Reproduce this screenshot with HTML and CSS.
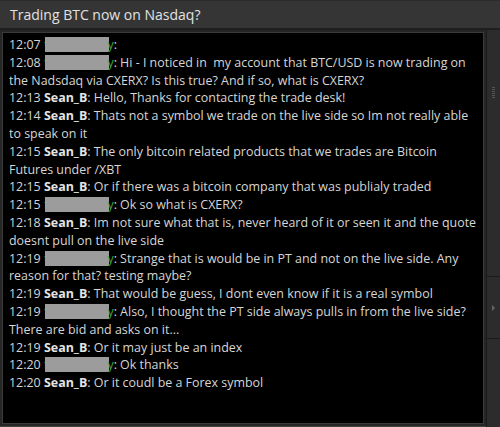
FILE: index.html
```html
<!DOCTYPE html>
<html>
<head>
<meta charset="utf-8">
<link rel="stylesheet" href="styles.css">
</head>
<body>
<div class="window">
  <div class="titlebar">Trading BTC now on Nasdaq?</div>
  <div class="main">
    <div class="frame">
      <div class="chat">
        <div class="line">12:07 <span class="user">t<span class="redact"></span>y</span>:</div>
        <div class="line">12:08 <span class="user">t<span class="redact"></span>y</span>: Hi - I noticed in&nbsp; my account that BTC/USD is now trading on the Nadsdaq via CXERX? Is this true? And if so, what is CXERX?</div>
        <div class="line">12:13 <b>Sean_B</b>: Hello, Thanks for contacting the trade desk!</div>
        <div class="line">12:14 <b>Sean_B</b>: Thats not a symbol we trade on the live side so Im not really able to speak on it</div>
        <div class="line">12:15 <b>Sean_B</b>: The only bitcoin related products that we trades are Bitcoin Futures under /XBT</div>
        <div class="line">12:15 <b>Sean_B</b>: Or if there was a bitcoin company that was publialy traded</div>
        <div class="line">12:15 <span class="user">t<span class="redact"></span>y</span>: Ok so what is CXERX?</div>
        <div class="line">12:18 <b>Sean_B</b>: Im not sure what that is, never heard of it or seen it and the quote doesnt pull on the live side</div>
        <div class="line">12:19 <span class="user">t<span class="redact"></span>y</span>: Strange that is would be in PT and not on the live side. Any reason for that? testing maybe?</div>
        <div class="line">12:19 <b>Sean_B</b>: That would be guess, I dont even know if it is a real symbol</div>
        <div class="line">12:19 <span class="user">t<span class="redact"></span>y</span>: Also, I thought the PT side always pulls in from the live side? There are bid and asks on it...</div>
        <div class="line">12:19 <b>Sean_B</b>: Or it may just be an index</div>
        <div class="line">12:20 <span class="user">t<span class="redact"></span>y</span>: Ok thanks</div>
        <div class="line">12:20 <b>Sean_B</b>: Or it coudl be a Forex symbol</div>
      </div>
    </div>
    <div class="side">
      <div class="seg seg-top"><span class="grip"></span></div>
      <div class="seg seg-tab"><span class="arrow"></span></div>
      <div class="seg seg-rest"></div>
    </div>
  </div>
</div>
</body>
</html>
```

FILE: styles.css
```css
html, body {
  margin: 0;
  padding: 0;
  background: #2a2a2a;
}
.window {
  width: 500px;
  height: 427px;
  display: flex;
  flex-direction: column;
  font-family: "Open Sans", "DejaVu Sans", sans-serif;
}
.titlebar {
  box-sizing: border-box;
  height: 30px;
  line-height: 27px;
  background: #353535;
  border-top: 1px solid #2c2c2c;
  border-bottom: 2px solid #1e1e1e;
  color: #e2e2e2;
  font-size: 14px;
  padding-left: 10px;
}
.main {
  flex: 1;
  display: flex;
  min-height: 0;
}
.frame {
  flex: 1;
  padding: 2px;
  background: #262626;
  border-bottom: 1px solid #444;
  display: flex;
}
.chat {
  flex: 1;
  background: #000;
  border: 1px solid #3a3a3a;
  padding: 3px 2px 0 6px;
  color: #d6d6d6;
  font-size: 12.45px;
  line-height: 17.8px;
}
.chat b {
  font-weight: 700;
  color: #e4e4e4;
}
.user {
  color: #3aa83a;
}
.redact {
  display: inline-block;
  width: 64px;
  height: 15px;
  background: #9c9c9c;
  vertical-align: -3px;
  margin-left: -3px;
  margin-right: -2px;
}
.side {
  width: 13px;
  background: #2c2c2c;
  border-left: 1px solid #1a1a1a;
  display: flex;
  flex-direction: column;
}
.seg-top {
  height: 246px;
  display: flex;
  align-items: center;
  justify-content: center;
  border-bottom: 1px solid #1a1a1a;
}
.grip {
  width: 3px;
  height: 12px;
  margin-top: -120px;
  background: repeating-linear-gradient(#555 0 1px, transparent 1px 2px);
}
.seg-tab {
  height: 61px;
  display: flex;
  align-items: center;
  justify-content: center;
  border-bottom: 1px solid #1a1a1a;
}
.arrow {
  width: 0;
  height: 0;
  border-left: 3px solid #666;
  border-top: 3px solid transparent;
  border-bottom: 3px solid transparent;
}
.seg-rest {
  flex: 1;
}
```
